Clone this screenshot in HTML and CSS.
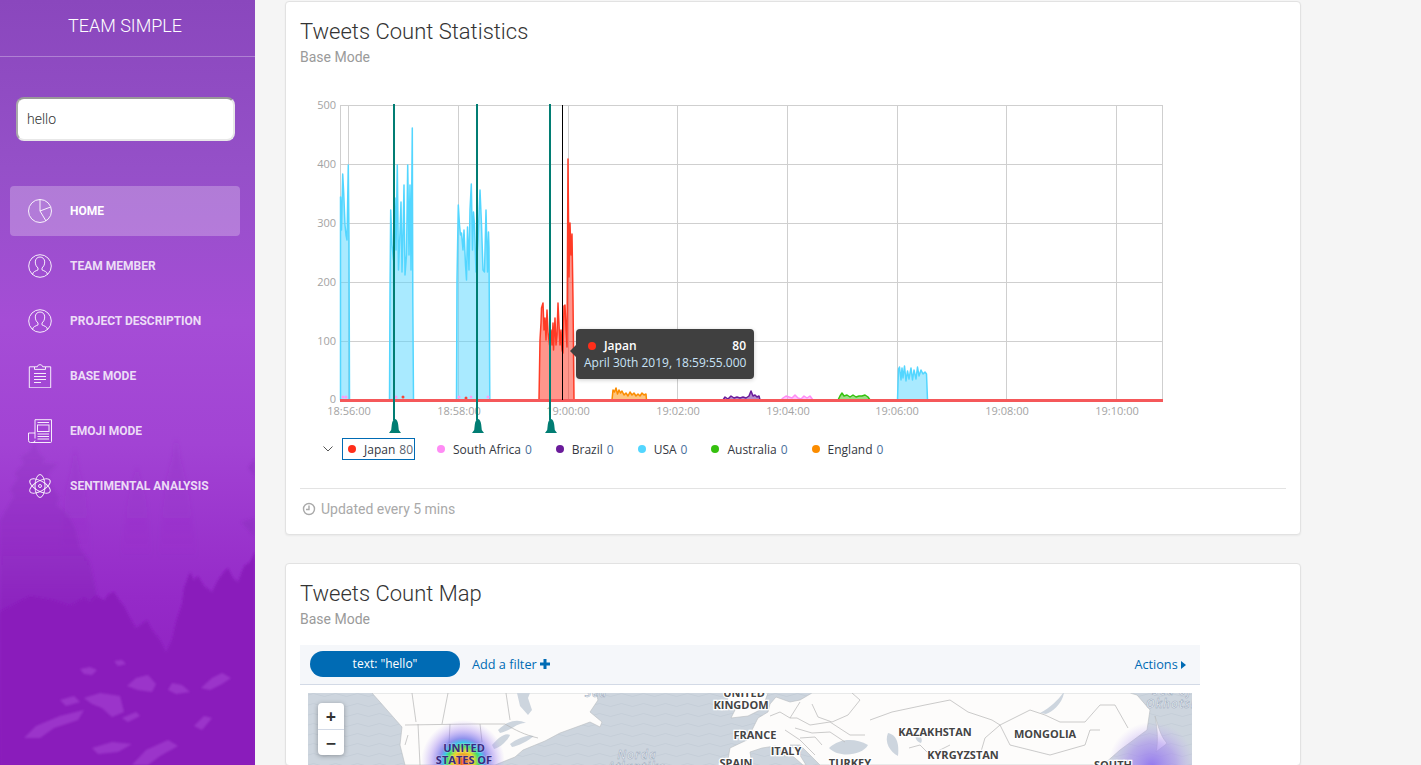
FILE: index.html
```html
<!DOCTYPE html>
<html lang="en">
<head>
<meta charset="utf-8">
<title>Team Simple</title>
<link rel="stylesheet" href="styles.css">
</head>
<body>
<div class="app">
  <aside class="sidebar">
    <svg class="forest" viewBox="0 0 255 765" preserveAspectRatio="none" aria-hidden="true">
      <defs>
        <filter id="soft" x="-10%" y="-10%" width="120%" height="120%"><feGaussianBlur stdDeviation="1.6"/></filter>
        <filter id="softer" x="-10%" y="-10%" width="120%" height="120%"><feGaussianBlur stdDeviation="2.200"/></filter>
        <filter id="crisp" x="-10%" y="-10%" width="120%" height="120%"><feGaussianBlur stdDeviation="1"/></filter>
        <filter id="rockblur" x="-10%" y="-10%" width="120%" height="120%"><feGaussianBlur stdDeviation="1.300"/></filter>
        <linearGradient id="pineFade" gradientUnits="userSpaceOnUse" x1="0" y1="440" x2="0" y2="620">
          <stop offset="0" stop-color="#8a2fbc" stop-opacity=".25"/>
          <stop offset=".6" stop-color="#8a28bc" stop-opacity=".42"/>
          <stop offset="1" stop-color="#8a1fbc" stop-opacity=".85"/>
        </linearGradient>
        <linearGradient id="farFade" gradientUnits="userSpaceOnUse" x1="0" y1="440" x2="0" y2="560">
          <stop offset="0" stop-color="#8a30bc" stop-opacity=".22"/>
          <stop offset="1" stop-color="#8a30bc" stop-opacity="0"/>
        </linearGradient>
      </defs>
      <g filter="url(#softer)">
        <path fill="url(#farFade)" d="M60 560L66 490 71 472 75 448 79 470 85 492 92 560Z"/>
        <path fill="url(#farFade)" d="M120 560L128 500 133 480 137 466 141 482 146 500 152 560Z"/>
        <path fill="url(#farFade)" d="M158 560L166 482 172 460 176 438 181 462 188 490 198 560Z"/>
      </g>
      <g filter="url(#soft)">
        <path fill="url(#pineFade)" d="M0 640V520L8 506 14 496 10 490 18 478 14 474 24 463 20 457 30 451 35 441 38 452 46 459 42 463 58 464 48 474 52 486 60 498 56 504 68 514 76 530 80 548 90 562 98 600 112 640Z"/>
        <path fill="#8a2bbc" fill-opacity=".45" d="M255 458L248 468 253 474 255 480ZM255 518L241 522 250 532 255 537ZM255 560L240 600 255 620Z"/>
      </g>
      <path filter="url(#crisp)" fill="#8a1cbb" d="M0 612L30 596 52 600 70 606 84 598 90 602 96 596 104 600 109 594 114 592 119 600 124 606 130 618 136 628 142 624 147 620 152 630 160 640 166 652 172 640 176 622 182 604 184 588 190 572 194 580 198 576 204 586 212 592 218 580 224 572 228 568 233 578 238 582 244 566 250 562 255 552V765H0Z"/>
      <g class="rocks" filter="url(#rockblur)">
        <path d="M80 669L90 667 97 670 92 675 84 674Z"/>
        <path d="M114 661L122 660 126 664 118 666Z"/>
        <path d="M127 686L136 678 148 675 156 684 152 692 138 690Z"/>
        <path d="M168 690L172 683 182 685 190 692 176 694Z"/>
        <path d="M201 688L212 678 222 673 231 678 222 684 210 690Z"/>
        <path d="M84 698L100 693 120 696 124 712 112 717 102 708 92 704Z"/>
        <path d="M24 738L36 726 60 716 84 710 78 720 54 728 40 738Z"/>
        <path d="M92 748L112 742 132 744 118 752 98 754Z"/>
        <path d="M132 765L146 750 168 740 178 746 160 756 148 765Z"/>
        <path d="M194 726L204 716 212 718 202 730Z"/>
        <path d="M60 700L74 696 80 702 66 706Z"/>
        <path d="M122 718L136 712 140 716 128 722Z"/>
      </g>
    </svg>
    <div class="brand">TEAM SIMPLE</div>
    <div class="search-wrap"><input class="search" type="text" value="hello" aria-label="Search"></div>
    <nav class="nav">
      <a class="nav-item active">
        <svg class="nav-icon" viewBox="0 0 24 24"><circle cx="12" cy="12" r="11.500"/><path d="M12 12V.5M12 12l10.600-4M12 12l6 10"/></svg>
        <span>Home</span>
      </a>
      <a class="nav-item">
        <svg class="nav-icon" viewBox="0 0 24 24"><circle cx="12" cy="12" r="11.300"/><path d="M4.500 20.500c.3-3 3.400-3.500 5.500-4.600v-2c-1.500-1-2.700-3.200-2.700-6C7.300 5 9.300 3 12 3s4.700 2 4.700 4.900c0 2.800-1.200 5-2.700 6v2c2.100 1.100 5.200 1.600 5.500 4.600"/></svg>
        <span>Team Member</span>
      </a>
      <a class="nav-item">
        <svg class="nav-icon" viewBox="0 0 24 24"><circle cx="12" cy="12" r="11.300"/><path d="M4.500 20.500c.3-3 3.400-3.500 5.500-4.600v-2c-1.500-1-2.700-3.200-2.700-6C7.300 5 9.300 3 12 3s4.700 2 4.700 4.900c0 2.800-1.200 5-2.700 6v2c2.100 1.100 5.200 1.600 5.500 4.600"/></svg>
        <span>Project Description</span>
      </a>
      <a class="nav-item">
        <svg class="nav-icon" viewBox="0 0 24 24"><path d="M6.500 2.800H1.300v21h21.400v-21h-5.200"/><path d="M6.500 5.400V2.800h2.800c.3-2.800 5.100-2.800 5.400 0h2.800v2.600z"/><path d="M6 9.500h12M6 12.500h12M6 15.500h12M6 18.500h7"/></svg>
        <span>Base Mode</span>
      </a>
      <a class="nav-item">
        <svg class="nav-icon" viewBox="0 0 24 24"><path d="M7 19.500V.7h16.500v21.800a1 1 0 0 1-1 1H2.500A2 2 0 0 1 .5 21.500V14h6.500"/><path d="M7 21.500a2 2 0 0 1-2 2"/><rect x="9.500" y="6" width="11.500" height="6.500"/><path d="M9.500 3.500h11.500M9.500 15h11.500M9.500 17.500h11.500M9.500 20h11.500"/></svg>
        <span>Emoji Mode</span>
      </a>
      <a class="nav-item">
        <svg class="nav-icon" viewBox="0 0 24 24"><ellipse cx="12" cy="12" rx="11.500" ry="5" transform="rotate(90 12 12)"/><ellipse cx="12" cy="12" rx="11.500" ry="5" transform="rotate(30 12 12)"/><ellipse cx="12" cy="12" rx="11.500" ry="5" transform="rotate(-30 12 12)"/><circle cx="12" cy="12" r="1.500"/></svg>
        <span>Sentimental Analysis</span>
      </a>
    </nav>
  </aside>

  <main class="main">
    <section class="card">
      <h2 class="card-title">Tweets Count Statistics</h2>
      <p class="card-sub">Base Mode</p>

      <div class="chart-wrap">
        <svg class="chart" width="986" height="345" viewBox="300 90 986 345" role="img" aria-label="Tweets count chart">
          <g class="grid">
            <path d="M340 105.500H1162M340 164.500H1162M340 223.500H1162M340 282.500H1162M340 341.500H1162"/>
            <path d="M340.500 105V400M348.500 105V400M458.500 105V400M568.500 105V400M677.500 105V400M787.500 105V400M897.500 105V400M1006.500 105V400M1116.500 105V400M1162.500 105V400"/>
          </g>
          <g class="ticks-y">
            <text x="336" y="109">500</text>
            <text x="336" y="168">400</text>
            <text x="336" y="227">300</text>
            <text x="336" y="286">200</text>
            <text x="336" y="345">100</text>
            <text x="336" y="403">0</text>
          </g>
          <g class="ticks-x">
            <text x="349" y="415">18:56:00</text>
            <text x="459" y="415">18:58:00</text>
            <text x="568" y="415">19:00:00</text>
            <text x="678" y="415">19:02:00</text>
            <text x="788" y="415">19:04:00</text>
            <text x="897" y="415">19:06:00</text>
            <text x="1007" y="415">19:08:00</text>
            <text x="1117" y="415">19:10:00</text>
          </g>

          <g class="series usa">
            <path d="M340.500 400V197L341.500 230 342.700 174 343.700 193 345 225 346 235 347 240 348.300 165 349 240 349.500 400Z"/>
            <path d="M389.500 400L390 293 390.700 210 392 245 393.500 260 395 198 396 250 397.300 165 398.500 270 400 232 401 202 402 272 403 235 404 185 405 275 406.500 255 407.700 165 409 255 410 185 411 270 412.300 128 412.800 300 413.500 400Z"/>
            <path d="M456.500 400L457 280 458.300 205 459.500 225 460.500 235 461.500 233 463 250 464 230 465.500 265 466.500 280 467.500 227 469 270 470 210 471.300 184 472.500 250 473.500 212 474.500 225 476 272 478 240 480 190 481.500 225 483 270 484.500 272 486 210 487.500 272 488.500 232 489 248 489.800 400Z"/>
            <path d="M897.500 400L898.500 369 899.500 367 901 380 902 368 903 378 904.500 366 906 381 907.500 371 909 379 911 368 912.500 380 914 370 916 379 917.500 367 919 376 921 370 923 374 925 372 926.500 374 927.500 400Z"/>
          </g>
          <g class="series japan">
            <path d="M539 400L540 340 541 323 541.500 308 543 303 544 330 545 318 546 340 547 310 548 332 549.500 345 551 330 552 345 553 323 553.500 350 555 318 556 345 557 335 558 303 559 325 560 345 561 330 562 350 563 353 564 306 565 305 566 330 567 347 568 159 569 277 570 223 571 255 572 234 573 300 574 400Z"/>
          </g>
          <g class="series england">
            <path d="M612 400L613 390 614.500 392 616 388 617.500 394 619 390 620.500 393 622 391 624 395 626 393 628 396 630 392 632 395 634 393 636 396 638 394 640 396 642 393 644 395 646 394 646.500 400Z"/>
          </g>
          <g class="series brazil">
            <path d="M723 400L725 397 728 399 731 396 734 398 737 397 740 398 743 397 746 398 749 396 751 391 753 396 755 395 757 397 759 396 760 400Z"/>
          </g>
          <g class="series africa">
            <path d="M781 400L783 398 786 396 789 397 792 398 795 395 798 398 801 399 804 396 807 398 810 396 813 400Z"/>
          </g>
          <g class="series australia">
            <path d="M838 400L840 396 842 393 844 396 847 395 850 397 853 395 856 397 859 396 862 396 865 395 868 397 870 400Z"/>
          </g>

          <g class="specks">
            <circle class="pink" cx="343" cy="397" r="1.500"/><circle class="pink" cx="346" cy="397" r="1.500"/>
            <circle class="pink" cx="396" cy="397" r="1.500"/><circle class="red" cx="403" cy="397" r="1.500"/>
            <circle class="pink" cx="459" cy="397" r="1.500"/><circle class="red" cx="466" cy="398" r="1.500"/>
            <circle class="pink" cx="471" cy="397" r="1.500"/><circle class="pink" cx="488" cy="397" r="1.500"/>
          </g>
          <path class="baseline" d="M340 400.500H1163"/>
          <path class="cursor" d="M562.500 105V400"/>
          <g class="marks">
            <path class="mark-line" d="M394 104V420M477 104V420M550 104V420"/>
            <path class="bell" d="M389 433l2.200-3 .6-5.500c.3-3 1.500-5.500 3.200-5.500s2.900 2.500 3.200 5.500l.6 5.500 2.200 3z"/>
            <path class="bell" d="M472 433l2.200-3 .6-5.500c.3-3 1.500-5.500 3.200-5.500s2.900 2.500 3.200 5.500l.6 5.500 2.200 3z"/>
            <path class="bell" d="M545 433l2.200-3 .6-5.500c.3-3 1.500-5.500 3.200-5.500s2.900 2.500 3.200 5.500l.6 5.500 2.200 3z"/>
          </g>
        </svg>

        <div class="tooltip">
          <div class="tip-row">
            <span class="dot dot-japan"></span>
            <span class="tip-name">Japan</span>
            <span class="tip-value">80</span>
          </div>
          <div class="tip-date">April 30th 2019, 18:59:55.000</div>
        </div>
      </div>

      <div class="legend">
        <svg class="chevron" width="10" height="6" viewBox="0 0 10 6"><path d="M.5.500l4.500 4.500L9.500.500"/></svg>
        <span class="legend-item selected"><span class="dot dot-japan"></span>Japan <b>80</b></span>
        <span class="legend-item"><span class="dot dot-africa"></span>South Africa <b>0</b></span>
        <span class="legend-item"><span class="dot dot-brazil"></span>Brazil <b>0</b></span>
        <span class="legend-item"><span class="dot dot-usa"></span>USA <b>0</b></span>
        <span class="legend-item"><span class="dot dot-australia"></span>Australia <b>0</b></span>
        <span class="legend-item"><span class="dot dot-england"></span>England <b>0</b></span>
      </div>

      <div class="card-foot">
        <svg class="clock" viewBox="0 0 14 14"><circle cx="7" cy="7" r="5.500"/><path d="M7 3.500V7.500H4"/></svg>
        <span>Updated every 5 mins</span>
      </div>
    </section>

    <section class="card">
      <h2 class="card-title">Tweets Count Map</h2>
      <p class="card-sub">Base Mode</p>

      <div class="filter-bar">
        <span class="pill">text: "hello"</span>
        <a class="add-filter">Add a filter <svg class="plus" viewBox="0 0 10 10"><path d="M3.500 0h3v3.500H10v3H6.500V10h-3V6.500H0v-3h3.500z"/></svg></a>
        <a class="actions">Actions <svg class="caret" viewBox="0 0 5 8"><path d="M0 0l5 4-5 4z"/></svg></a>
      </div>

      <div class="map">
        <svg class="map-svg" width="884" height="72" viewBox="308 693 884 72" role="img" aria-label="Heat map of tweets">
          <defs>
            <pattern id="waves" width="22" height="10" patternUnits="userSpaceOnUse">
              <path d="M0 5q5.500-3 11 0t11 0" fill="none" stroke="#c5ced8" stroke-width="1"/>
            </pattern>
            <radialGradient id="heatA">
              <stop offset="0" stop-color="#f1501e"/>
              <stop offset=".14" stop-color="#f08a2a"/>
              <stop offset=".26" stop-color="#e8d92f"/>
              <stop offset=".38" stop-color="#42dc6a"/>
              <stop offset=".46" stop-color="#3cc8e8"/>
              <stop offset=".56" stop-color="#6a6ee8" stop-opacity=".75"/>
              <stop offset=".76" stop-color="#9a7cf0" stop-opacity=".4"/>
              <stop offset="1" stop-color="#b69cf5" stop-opacity="0"/>
            </radialGradient>
            <radialGradient id="heatB">
              <stop offset="0" stop-color="#8d6ff0" stop-opacity=".9"/>
              <stop offset=".55" stop-color="#a78bf0" stop-opacity=".55"/>
              <stop offset="1" stop-color="#c4b0f5" stop-opacity="0"/>
            </radialGradient>
          </defs>
          <rect x="308" y="693" width="884" height="72" fill="#cdd5de"/>
          <rect x="308" y="693" width="884" height="72" fill="url(#waves)"/>
          <g class="land">
            <path d="M372 693L380 702 387 710 402 727 400 745 405 765H495L515 757 523 750 545 741 560 733 582 725 590 722 600 727 602 722 590 712 598 700 596 693Z"/>
            <path d="M723 693L728 699 722 706 736 708 731 718 748 716 762 709 768 693Z"/>
            <path d="M758 718L747 740 730 748 727 765H752L750 752 762 748 775 746 782 748 795 758 803 765H806L798 752 790 745 800 745 815 760 820 765H1103L1120 750 1147 730 1150 710 1137 695 1130 693H812L800 700 790 702 776 697 770 704 768 712Z"/>
            <path d="M1155 716C1158 730 1158 745 1156 752 1163 746 1168 744 1166 742 1160 735 1158 725 1155 716Z"/>
          </g>
          <g class="water">
            <path d="M517 693L520 706 528 715 532 710 528 698 530 693Z"/>
            <path d="M498 730C506 722 516 718 526 723 518 722 512 730 500 733Z"/>
            <path d="M492 745C498 738 505 732 510 735 508 740 500 748 494 749Z"/>
            <path d="M510 744C518 738 528 734 534 736 528 741 518 746 512 747Z"/>
            <path d="M1040 713C1050 708 1058 700 1063 693H1064C1062 704 1052 712 1046 714Z"/>
            <path d="M829 748C840 738 855 738 868 745 862 756 838 758 829 748Z"/>
            <path d="M888 733C898 735 899 746 898 756 890 752 884 742 888 733Z"/>
            <path d="M916 733C921 735 923 740 921 743 917 742 914 738 916 733Z"/>
          </g>
          <g class="borders">
            <path d="M405 725L472 724 505 724C515 730 525 735 538 738"/>
            <path d="M408 735L405 745M418 724L420 765M450 724L448 765M480 724L482 742M506 693L510 720M448 693L442 724M412 693L416 722"/>
            <path d="M770 716L780 712 790 718 797 718 810 725 830 722 850 735 865 735M790 718L800 702M812 704L818 717 832 722 848 715 860 700 852 693M795 728L812 733 830 732 845 742M785 730L800 740 815 755M800 738L815 737 822 745"/>
            <path d="M870 720L892 712 925 705 950 700 968 712 992 720 1000 725 1030 710 1045 715 1060 722 1085 722 1100 705 1115 705 1128 728"/>
            <path d="M1000 725L1010 745 1050 755 1085 745 1090 730 1100 730M1000 725L985 738 980 755M909 748L920 745 930 755 950 745"/>
          </g>
          <circle cx="463" cy="762" r="42" fill="url(#heatA)"/>
          <circle cx="1152" cy="766" r="44" fill="url(#heatB)"/>
          <g class="map-labels">
            <text x="744" y="697">UNITED</text>
            <text x="741" y="709">KINGDOM</text>
            <text x="755" y="739">FRANCE</text>
            <text x="786" y="755">ITALY</text>
            <text x="736" y="767">SPAIN</text>
            <text x="850" y="767">TURKEY</text>
            <text x="935" y="736">KAZAKHSTAN</text>
            <text x="963" y="759">KYRGYZSTAN</text>
            <text x="1045" y="738">MONGOLIA</text>
            <text x="1113" y="769">SOUTH</text>
            <text class="heat-label" x="464" y="752">UNITED</text>
            <text class="heat-label" x="464" y="764">STATES OF</text>
          </g>
          <g class="sea-labels">
            <text x="637" y="759">Norda</text>
            <text x="637" y="771">Atlantiko</text>
            <text x="1172" y="695">Sea of</text>
            <text x="1172" y="708">Okhotsk</text>
            <text x="596" y="697">Sea</text>
          </g>
        </svg>
        <div class="zoom">
          <button class="zoom-btn" type="button">+</button>
          <button class="zoom-btn" type="button">−</button>
        </div>
      </div>
    </section>
  </main>
</div>
</body>
</html>
```
FILE: styles.css
```css
* { box-sizing: border-box; }
html, body { margin: 0; height: 765px; overflow: hidden; }
body { font-family: Roboto, "Liberation Sans", sans-serif; background: #f5f5f5; color: #333; }

.app { display: flex; height: 765px; overflow: hidden; }

/* Sidebar */
.sidebar {
  position: relative;
  flex: 0 0 255px;
  height: 765px;
  background: linear-gradient(180deg, #8a47bd 0%, #9550c8 22%, #a54dd6 42%, #a243d4 58%, #952ac8 78%, #8a1abb 100%);
  color: #fff;
}
.forest { position: absolute; inset: 0; width: 255px; height: 765px; }
.rocks path { fill: #b257de; fill-opacity: .42; }
.brand {
  position: relative;
  height: 57px;
  padding-right: 5px;
  border-bottom: 1px solid rgba(255, 255, 255, .3);
  font-size: 18px;
  font-weight: 300;
  line-height: 52px;
  text-align: center;
}
.search-wrap { position: relative; padding: 40px 20px 0 16px; }
.search {
  display: block;
  width: 219px;
  height: 44px;
  padding: 0 9px;
  border: 2px solid #e8e8e8;
  border-top-color: #999;
  border-left-color: #aaa;
  border-radius: 8px;
  background: #fff;
  color: #333;
  font: 300 14px Roboto, sans-serif;
  outline: 0;
}
.nav { position: relative; display: flex; flex-direction: column; gap: 5px; padding: 45px 15px 0 10px; }
.nav-item {
  display: flex;
  align-items: center;
  height: 50px;
  padding-left: 18px;
  border-radius: 4px;
  color: rgba(255, 255, 255, .82);
  font-size: 12px;
  font-weight: 700;
  text-transform: uppercase;
}
.nav-item.active { background: rgba(255, 255, 255, .25); color: #fff; }
.nav-icon { flex: none; width: 24px; height: 24px; margin-right: 18px; fill: none; stroke: rgba(255, 255, 255, .9); stroke-width: 1; }

/* Main */
.main { flex: 1; display: flex; flex-direction: column; gap: 28px; padding: 1px 120px 0 30px; min-width: 0; }
.card {
  flex: none;
  padding: 15px 14px 0;
  background: #fff;
  border: 1px solid #e2e2e2;
  border-radius: 4px;
  box-shadow: 0 1px 2px rgba(0, 0, 0, .05);
}
.card-title { margin: 0; font-size: 22px; font-weight: 300; line-height: 30px; color: #333; }
.card-sub { margin: 0; font-size: 14px; line-height: 21px; color: #9a9a9a; }

.chart-wrap { position: relative; margin-top: 22px; height: 345px; }
.chart { display: block; }
.grid path { fill: none; stroke: #cfcfcf; stroke-width: 1; }
.ticks-y text, .ticks-x text { font: 11px "Open Sans", sans-serif; fill: #a3a3a3; }
.ticks-y text { text-anchor: end; }
.ticks-x text { text-anchor: middle; }
.series path { stroke-width: 1.500; stroke-linejoin: round; fill-opacity: .5; }
.usa path { fill: #53d6ff; stroke: #53d6ff; }
.japan path { fill: #ff2e1a; stroke: #ff3b26; }
.england path { fill: #fb8c00; stroke: #fb8c00; }
.brazil path { fill: #6a1b9a; stroke: #6a1b9a; }
.africa path { fill: #ff8cf5; stroke: #ff8cf5; }
.australia path { fill: #35c00e; stroke: #35c00e; }
.specks .pink { fill: #ff9cf5; }
.specks .red { fill: #f4473a; }
.baseline { fill: none; stroke: #f5585a; stroke-width: 3; }
.cursor { fill: none; stroke: #000; stroke-width: 1; }
.mark-line { fill: none; stroke: #017d73; stroke-width: 2; }
.bell { fill: #017d73; }

.tooltip {
  position: absolute;
  left: 276px;
  top: 239px;
  width: 178px;
  height: 50px;
  padding: 8px 8px 0 8px;
  border-radius: 4px;
  background: #404040;
  color: #fff;
  font: 12px/17px "Open Sans", sans-serif;
  box-shadow: 0 1px 4px rgba(0, 0, 0, .2);
}
.tooltip::before {
  content: "";
  position: absolute;
  left: -6px;
  top: 16px;
  border: 6px solid transparent;
  border-left: 0;
  border-right-color: #404040;
}
.tip-row { display: flex; align-items: center; font-weight: 600; }
.tip-row .dot { margin: 0 8px 0 4px; }
.tip-value { margin-left: auto; }
.tip-date { color: #c9e3f7; white-space: nowrap; }

.dot { display: inline-block; flex: none; width: 8px; height: 8px; border-radius: 50%; }
.dot-japan { background: #ff2e1a; }
.dot-africa { background: #ff8cf5; }
.dot-brazil { background: #6a1b9a; }
.dot-usa { background: #53d6ff; }
.dot-australia { background: #35c00e; }
.dot-england { background: #fb8c00; }

.legend { display: flex; align-items: center; height: 22px; margin-top: 3px; padding-left: 23px; font: 12px "Open Sans", sans-serif; color: #343741; }
.chevron { flex: none; margin-right: 9px; fill: none; stroke: #555; stroke-width: 1; }
.legend-item { display: flex; align-items: center; white-space: nowrap; margin-right: 24px; }
.legend-item .dot { margin-right: 8px; }
.legend-item b { margin-left: 4px; font-weight: 400; color: #4a6f9c; }
.legend-item.selected { height: 22px; width: 73px; margin-right: 22px; padding-left: 5px; border: 1px solid #006bb4; }
.legend-item.selected b { color: #5b6470; }

.card-foot {
  display: flex;
  align-items: center;
  height: 46px;
  margin-top: 28px;
  padding: 0 0 5px 2px;
  border-top: 1px solid #e3e3e3;
  font-size: 14px;
  color: #a9a9a9;
}
.clock { width: 14px; height: 14px; margin-right: 5px; fill: none; stroke: #a9a9a9; stroke-width: 1.400; }

/* Filter bar */
.filter-bar {
  display: flex;
  align-items: center;
  width: 900px;
  height: 40px;
  margin-top: 15px;
  padding: 0 14px 1px 10px;
  background: #f5f7fa;
  border-bottom: 1px solid #d3dae6;
  font: 12.7px "Open Sans", sans-serif;
  color: #006bb4;
}
.pill {
  width: 150px;
  height: 26px;
  border-radius: 13px;
  background: #006bb4;
  color: #fff;
  font-size: 12px;
  font-weight: 500;
  line-height: 25px;
  text-align: center;
}
.add-filter { margin-left: 12px; }
.plus { width: 10px; height: 10px; fill: #006bb4; }
.actions { margin-left: auto; }
.caret { width: 5px; height: 8px; fill: #006bb4; }

.map { position: relative; width: 884px; height: 72px; margin: 8px 0 0 8px; }
.map-svg { display: block; }
.land path { fill: #fdfcfb; stroke: #b8bcc0; stroke-width: .6; }
.water path { fill: #cdd5de; }
.borders path { fill: none; stroke: #b5b5b5; stroke-width: .7; }
.map-labels text { font: 700 11px "Open Sans", sans-serif; fill: #444; stroke: #fff; stroke-width: 2.500; paint-order: stroke; text-anchor: middle; }
.map-labels .heat-label { fill: #3a2a80; stroke: rgba(255, 255, 255, .25); stroke-width: 1.500; }
.sea-labels text { font: italic 600 12px "Open Sans", sans-serif; letter-spacing: 1px; fill: #eef2f6; stroke: #9aa8ba; stroke-width: .5; text-anchor: middle; }

.zoom {
  position: absolute;
  left: 10px;
  top: 10px;
  width: 26px;
  display: flex;
  flex-direction: column;
  border-radius: 4px;
  background: #fff;
  box-shadow: 0 1px 5px rgba(0, 0, 0, .3);
}
.zoom-btn {
  width: 26px;
  height: 26px;
  padding: 0;
  border: 0;
  background: none;
  color: #333;
  font: 700 18px/24px "Open Sans", sans-serif;
}
.zoom-btn + .zoom-btn { border-top: 1px solid #d3dae6; }
```
